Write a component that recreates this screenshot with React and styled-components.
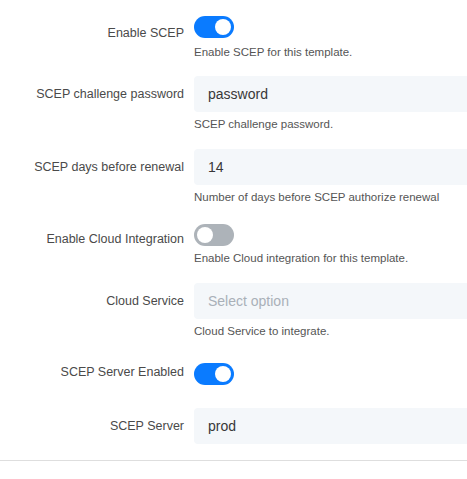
import React, {useState} from 'react';
import styled, {createGlobalStyle} from 'styled-components';

const GlobalStyle = createGlobalStyle`
html, body {
    margin: 0;
    padding: 0;
    background: #ffffff;
    overflow: hidden;
}
body {
    font-family: "Liberation Sans", Arial, sans-serif;
}
`;

const Page = styled.div`
width: 560px;
padding-top: 15px;
`;

const Form = styled.div`
display: flex;
flex-direction: column;
`;

const Row = styled.div`
display: grid;
grid-template-columns: 184px 1fr;
column-gap: 10px;
align-items: start;
margin-top: ${({$top}) => $top || 0}px;
`;

const Label = styled.label`
text-align: right;
font-size: 12.5px;
line-height: 36px;
color: #4a4a4a;
white-space: nowrap;
`;

const Control = styled.div`
display: flex;
flex-direction: column;
`;

const Input = styled.input`
box-sizing: border-box;
height: 36px;
width: 100%;
border: none;
border-radius: 4px;
background: #f4f7fa;
padding: 0 14px;
font-family: inherit;
font-size: 14px;
color: #383838;
outline: none;
&::placeholder {
    color: #a9b0b8;
}
`;

const Help = styled.div`
margin-top: ${({$gap}) => $gap || 4}px;
font-size: 11.5px;
line-height: 16px;
color: #555;
white-space: nowrap;
`;

const Switch = styled.button`
position: relative;
width: 40px;
height: 22px;
margin-top: ${({$offset}) => $offset || 0}px;
padding: 0;
border: none;
border-radius: 11px;
background: ${({$on}) => $on ? '#0a7bff' : '#adb3b9'};
cursor: pointer;
&::after {
    content: "";
    position: absolute;
    top: 3px;
    left: ${({$on}) => $on ? '21px' : '3px'};
    width: 16px;
    height: 16px;
    border-radius: 50%;
    background: #fff;
}
`;

const Divider = styled.hr`
margin: 16px 0 0 0;
border: none;
border-top: 1px solid #dedede;
`;

function Toggle({initial, offset}) {
    const [on, setOn] = useState(initial);
    return <Switch type="button" $on={on} $offset={offset} onClick={() => setOn(!on)} />;
}

export default function App() {
    const [password, setPassword] = useState('password');
    const [days, setDays] = useState('14');
    const [server, setServer] = useState('prod');

    return (
        <>
        <GlobalStyle />
        <Page>
            <Form>
                <Row>
                    <Label>Enable SCEP</Label>
                    <Control>
                        <Toggle initial={true} offset={1} />
                        <Help $gap={6}>Enable SCEP for this template.</Help>
                    </Control>
                </Row>
                <Row $top={16}>
                    <Label>SCEP challenge password</Label>
                    <Control>
                        <Input value={password} onChange={e => setPassword(e.target.value)} />
                        <Help>SCEP challenge password.</Help>
                    </Control>
                </Row>
                <Row $top={17}>
                    <Label>SCEP days before renewal</Label>
                    <Control>
                        <Input value={days} onChange={e => setDays(e.target.value)} />
                        <Help>Number of days before SCEP authorize renewal</Help>
                    </Control>
                </Row>
                <Row $top={16}>
                    <Label>Enable Cloud Integration</Label>
                    <Control>
                        <Toggle initial={false} offset={3} />
                        <Help $gap={4}>Enable Cloud integration for this template.</Help>
                    </Control>
                </Row>
                <Row $top={17}>
                    <Label>Cloud Service</Label>
                    <Control>
                        <Input placeholder="Select option" readOnly />
                        <Help>Cloud Service to integrate.</Help>
                    </Control>
                </Row>
                <Row $top={15}>
                    <Label>SCEP Server Enabled</Label>
                    <Control>
                        <Toggle initial={true} offset={9} />
                    </Control>
                </Row>
                <Row $top={18}>
                    <Label>SCEP Server</Label>
                    <Control>
                        <Input value={server} onChange={e => setServer(e.target.value)} />
                    </Control>
                </Row>
            </Form>
            <Divider />
        </Page>
        </>
    );
}
